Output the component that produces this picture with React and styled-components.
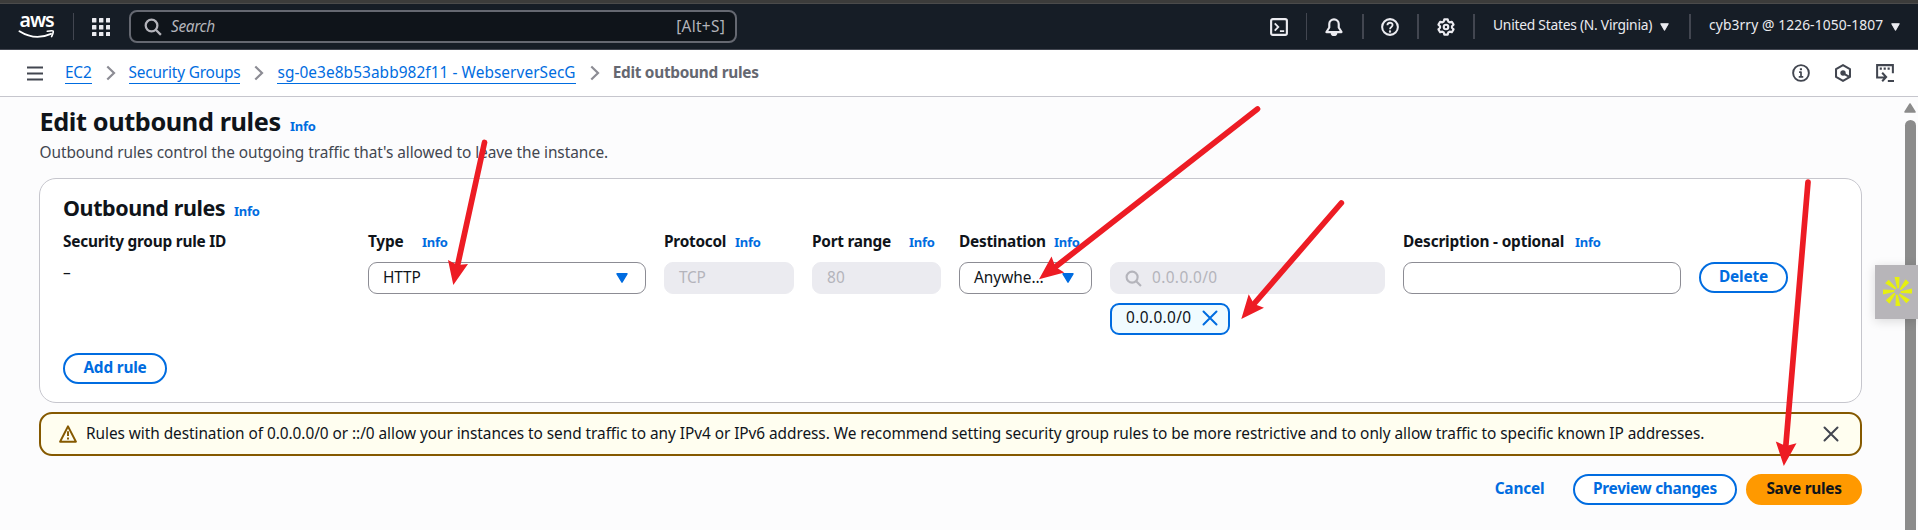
import React from 'react';
import styled, { createGlobalStyle } from 'styled-components';

const Global = createGlobalStyle`
  * { box-sizing: border-box; }
  html, body { margin: 0; height: 100%; overflow: hidden; }
  body {
    background: #fcfcfd;
    color: #0f141a;
    font-family: "Noto Sans", "Open Sans", sans-serif;
    font-size: 15.4px;
    line-height: 22px;
  }
`;

const Page = styled.div`
  position: relative;
  height: 530px;
  display: flex;
  flex-direction: column;
  overflow: hidden;
  white-space: nowrap;
`;

/* ---------- top navigation ---------- */
const WindowEdge = styled.div`
  height: 4px;
  background: #3c3c3b;
  border-bottom: 1px solid #4b4b4b;
`;
const TopNav = styled.header`
  height: 46px;
  padding-left: 18px;
  background: #161d26;
  border-bottom: 1px solid #424650;
  display: flex;
  align-items: center;
`;
const LogoBox = styled.div`
  width: 38px;
  height: 34px;
  display: flex;
  flex-direction: column;
  color: #fff;
  svg { flex: none; margin-top: -2px; }
`;
const LogoWord = styled.span`
  margin-top: -1px;
  padding-left: 1.5px;
  font-size: 19.5px;
  font-weight: 600;
  line-height: 22px;
  letter-spacing: -1px;
`;
const NavRule = styled.span`
  width: ${(p) => p.$w || 2}px;
  height: ${(p) => (p.$w === 1 ? 27 : 25)}px;
  margin-left: ${(p) => p.$ml}px;
  margin-top: ${(p) => (p.$w === 1 ? 0 : -1)}px;
  background: #424650;
`;
const NavIcon = styled.span`
  display: flex;
  margin-left: ${(p) => p.$ml}px;
  color: #ebebf0;
`;
const SearchBox = styled.div`
  width: 608px;
  height: 33px;
  margin-left: 19px;
  padding: 0 10px 0 13px;
  display: flex;
  align-items: center;
  color: #b4b4bb;
  background: #0f141a;
  border: 2px solid #656871;
  border-radius: 8px;
`;
const SearchHint = styled.em`
  flex: 1;
  margin-left: 9px;
  letter-spacing: -0.35px;
`;
const Shortcut = styled.span`
  letter-spacing: 0.3px;
`;
const NavText = styled.span`
  display: flex;
  align-items: center;
  margin-left: ${(p) => p.$ml}px;
  margin-top: -3px;
  color: #ebebf0;
  font-size: 13.8px;
  letter-spacing: ${(p) => p.$ls}px;
  svg { margin: 3px 0 0 ${(p) => p.$caret}px; }
`;

/* ---------- breadcrumb bar ---------- */
const CrumbBar = styled.nav`
  height: 47px;
  padding: 0 24px 0 27px;
  background: #fff;
  border-bottom: 1px solid #c6c6cd;
  display: flex;
  align-items: center;
  color: #424650;
`;
const Crumb = styled.a`
  height: 20px;
  line-height: 18px;
  margin-top: 1px;
  color: #006ce0;
  border-bottom: 1px solid #006ce0;
  letter-spacing: ${(p) => p.$ls}px;
`;
const CurrentCrumb = styled.span`
  flex: 1;
  color: #656871;
  font-weight: 700;
  letter-spacing: -0.28px;
`;
const Tray = styled.div`
  display: flex;
  gap: 24px;
`;

/* ---------- content ---------- */
const Main = styled.main`
  padding: 7px 56px 0 39px;
`;
const Heading = styled.div`
  display: flex;
  align-items: baseline;
  height: ${(p) => p.$h}px;
  line-height: ${(p) => p.$h}px;
`;
const H1 = styled.h1`
  margin: 0;
  width: 251px;
  padding-left: 0.5px;
  font-size: 25.3px;
  letter-spacing: -0.4px;
`;
const H2 = styled.h2`
  margin: 0;
  width: 171px;
  font-size: 21.5px;
  letter-spacing: -0.42px;
`;
const Info = styled.a`
  color: #006ce0;
  font-size: 13px;
  font-weight: 700;
  letter-spacing: -0.3px;
`;
const Lead = styled.p`
  margin: 4px 0 0 0.5px;
  color: #424650;
  letter-spacing: -0.07px;
`;
const Card = styled.section`
  height: 225px;
  margin-top: 14px;
  padding: 14px 23px 0;
  background: #fff;
  border: 1px solid #c6c6cd;
  border-radius: 17px;
`;
const RuleGrid = styled.div`
  margin-top: 6px;
  display: grid;
  grid-template-columns: 287px 278px 130px 129px 133px 275px 278px 89px;
  column-gap: 18px;
  align-items: start;
`;
const Label = styled.div`
  height: 22px;
  display: flex;
  align-items: baseline;
  margin: 2px 0 9px;
  font-weight: 700;
`;
const LabelText = styled.span`
  width: ${(p) => p.$w}px;
  letter-spacing: ${(p) => p.$ls}px;
`;
const RuleId = styled.div`
  line-height: 22px;
`;
const Field = styled.div`
  height: 32px;
  padding: 0 17px 0 14px;
  display: flex;
  align-items: center;
  justify-content: ${(p) => (p.$lead ? 'flex-start' : 'space-between')};
  gap: ${(p) => (p.$lead ? 10 : 0)}px;
  color: ${(p) => (p.$disabled ? '#b4b4bb' : '#0f141a')};
  background: ${(p) => (p.$disabled ? '#ebebf0' : '#fff')};
  border: 1px solid ${(p) => (p.$disabled ? '#ebebf0' : '#8c8c94')};
  border-radius: 9px;
  letter-spacing: ${(p) => p.$ls || 0}px;
`;
const Token = styled.div`
  width: 120px;
  height: 32px;
  margin-top: 9px;
  padding: 0 10px 3px 14px;
  display: flex;
  align-items: center;
  justify-content: space-between;
  background: #f0fbff;
  border: 2px solid #006ce0;
  border-radius: 9px;
  letter-spacing: 0.38px;
`;
const buttonColors = {
  normal: { border: '#006ce0', text: '#006ce0', fill: '#fff' },
  link: { border: 'transparent', text: '#006ce0', fill: 'transparent' },
  primary: { border: '#ff9900', text: '#0f141a', fill: '#ff9900' },
};
const Button = styled.button`
  width: ${(p) => p.$w}px;
  height: 31px;
  padding: 0 0 1px;
  font: 700 15.4px/22px "Noto Sans", "Open Sans", sans-serif;
  letter-spacing: ${(p) => p.$ls}px;
  border-radius: 16px;
  border: 2px solid ${(p) => buttonColors[p.$kind || 'normal'].border};
  color: ${(p) => buttonColors[p.$kind || 'normal'].text};
  background: ${(p) => buttonColors[p.$kind || 'normal'].fill};
`;
const CardFooter = styled.div`
  margin-top: 18px;
`;
const Alert = styled.div`
  height: 44px;
  margin-top: 9px;
  padding: 0 21px 1px 18px;
  display: flex;
  align-items: center;
  background: #fffef0;
  border: 2px solid #855900;
  border-radius: 13px;
`;
const AlertText = styled.span`
  flex: 1;
  margin-left: 9px;
  letter-spacing: -0.055px;
`;
const Dismiss = styled.span`
  display: flex;
  color: #424650;
`;
const Actions = styled.div`
  display: flex;
  justify-content: flex-end;
  margin-top: 18px;
  gap: 9px;
`;

/* ---------- overlays ---------- */
const Scrollbar = styled.div`
  position: absolute;
  top: 103px;
  right: 2px;
  bottom: 0;
  width: 12px;
  display: flex;
  flex-direction: column;
  align-items: center;
`;
const Thumb = styled.div`
  width: 11px;
  flex: 1;
  margin-top: 7px;
  background: #8b8b8b;
  border-radius: 6px 6px 0 0;
`;
const SideWidget = styled.div`
  position: absolute;
  top: 265px;
  right: 0;
  width: 43px;
  height: 54px;
  padding: 11px 0 0 7px;
  background: #b7b5b9;
  box-shadow: 0 2px 10px rgba(0, 0, 0, 0.14);
`;
const Markup = styled.svg`
  position: absolute;
  inset: 0;
  pointer-events: none;
`;

/* ---------- icons ---------- */
const Svg = ({ s = 18, children, sw = 2 }) => (
  <svg width={s} height={s} viewBox="0 0 16 16" fill="none" stroke="currentColor" strokeWidth={sw} strokeLinejoin="round">
    {children}
  </svg>
);
const Logo = () => (
  <LogoBox>
    <LogoWord>aws</LogoWord>
    <svg width="38" height="12" viewBox="0 0 38 12" fill="none" stroke="currentColor" strokeLinecap="round" strokeLinejoin="round">
      <path d="M1.5 2.2 Q17 12 33 4.8" strokeWidth="1.9" />
      <path d="M29.3 2.3 Q34.7 1.2 35.2 2.2 Q35.6 3.6 33.6 7.6" strokeWidth="1.6" />
    </svg>
  </LogoBox>
);
const Apps = () => (
  <svg width="18" height="18" viewBox="0 0 18 18" fill="currentColor">
    {[0, 7, 14].flatMap((y) => [0, 7, 14].map((x) => <rect key={`${x}-${y}`} x={x} y={y} width="4.4" height="4.4" rx="0.5" />))}
  </svg>
);
const Magnifier = ({ s = 18 }) => (
  <Svg s={s}><circle cx="6.7" cy="6.7" r="5.2" /><path d="M10.5 10.5 15 15" /></Svg>
);
const Caret = ({ w = 8, h = 7.5 }) => (
  <svg width={w} height={h} viewBox="0 0 12 10"><path d="M1 .8h10L6 9.2z" fill="currentColor" stroke="currentColor" strokeWidth="1.4" strokeLinejoin="round" /></svg>
);
const Blue = styled.span`
  display: flex;
  color: #006ce0;
`;
const ChevronIcon = ({ className }) => (
  <svg className={className} width="10" height="16" viewBox="0 0 10 16"><path d="M1.3 1.5 8 8l-6.7 6.5" fill="none" stroke="#8c8c94" strokeWidth="2.2" /></svg>
);
const Chevron = styled(ChevronIcon)`
  margin: 0 13px 0 14px;
`;
const Cross = ({ s = 16, w = 2 }) => (
  <svg width={s} height={s} viewBox="0 0 16 16"><path d="M1.5 1.5l13 13M14.5 1.5l-13 13" stroke="currentColor" strokeWidth={w} strokeLinecap="round" /></svg>
);
const Warning = () => (
  <svg width="18" height="18" viewBox="0 0 16 16" fill="none" stroke="#855900" strokeWidth="1.8" strokeLinejoin="round">
    <path d="M8 1.2 15 14.8H1z" />
    <path d="M8 5.5v4.3M8 11.2v1.7" strokeWidth="1.7" />
  </svg>
);
const Burst = () => (
  <svg width="31" height="31" viewBox="-15.5 -15.5 31 31" fill="#e6f011">
    {[0, 45, 90, 135, 180, 225, 270, 315].map((a) => (
      <path key={a} d="M-3-14.5 2-14.5 1.6-3.4-.2-3z" transform={`rotate(${a})`} />
    ))}
  </svg>
);
const Menu = styled.span`
  display: flex;
  margin-right: 22px;
`;

const arrows = [
  { from: [484.5, 142.5], to: [457, 268], head: '453.3,285 448,260 457.5,265 468,264' },
  { from: [1257.5, 109], to: [1054, 268], head: '1039,279.3 1051.5,256.5 1055.5,267 1064.3,272.5' },
  { from: [1341.3, 203], to: [1253, 305], head: '1241.3,319 1248.7,294.3 1254,304 1264,307.7' },
  { from: [1808, 182], to: [1785.8, 446], head: '1783.8,466 1775.8,441.5 1786,446 1796.5,443.3' },
];

export default function App() {
  return (
    <>
      <Global />
      <Page>
        <WindowEdge />
        <TopNav>
          <Logo />
          <NavRule $w={1} $ml={17} />
          <NavIcon $ml={18}><Apps /></NavIcon>
          <SearchBox>
            <Magnifier />
            <SearchHint>Search</SearchHint>
            <Shortcut>[Alt+S]</Shortcut>
          </SearchBox>
          <NavIcon $ml={533}>
            <Svg sw={1.9}><rect x="1" y="1" width="14" height="14" rx="1.5" /><path d="M4.2 4.7 7.4 8l-3.2 3.3M8.8 11.7h3.8" strokeWidth="1.6" strokeLinejoin="miter" /></Svg>
          </NavIcon>
          <NavRule $w={1} $ml={18} />
          <NavIcon $ml={18}>
            <Svg sw={1.9}><path d="M8 1.2a4.2 4.2 0 0 0-4.2 4.2v3L1.3 12.5h13.4L12.2 8.4v-3A4.2 4.2 0 0 0 8 1.2z" /><path d="M5 13h6a3 3 0 0 1-6 0z" fill="currentColor" stroke="none" /></Svg>
          </NavIcon>
          <NavRule $ml={19} />
          <NavIcon $ml={17}>
            <Svg sw={1.8}><circle cx="8" cy="8" r="7" /><path d="M5.7 6.5c0-3 4.6-3 4.6-.2C10.3 8 8 7.9 8 10" strokeWidth="1.6" /><circle cx="8" cy="12" r=".6" strokeWidth=".9" /></Svg>
          </NavIcon>
          <NavRule $ml={18} />
          <NavIcon $ml={18}>
            <Svg sw={1.9}>
              <path d="M6.5 1.2h3l.5 1.9 1.3.8 1.9-.6 1.5 2.6L13.3 7.3v1.4l1.4 1.4-1.5 2.6-1.9-.6-1.3.8-.5 1.9h-3L6 12.9l-1.3-.8-1.9.6-1.5-2.6 1.4-1.4V7.3L1.3 5.9l1.5-2.6 1.9.6L6 3.1z" />
              <circle cx="8" cy="8" r="2" />
            </Svg>
          </NavIcon>
          <NavRule $ml={18} />
          <NavText $ml={18} $ls={-0.24} $caret={8}>United States (N. Virginia)<Caret w={9} h={8} /></NavText>
          <NavRule $ml={20} />
          <NavText $ml={18} $ls={0.1} $caret={8}>cyb3rry @ 1226-1050-1807<Caret w={9} h={8} /></NavText>
        </TopNav>

        <CrumbBar>
          <Menu><svg width="16" height="15" viewBox="0 0 16 15"><path d="M0 1.5h16M0 7.5h16M0 13.5h16" stroke="#424650" strokeWidth="2" /></svg></Menu>
          <Crumb $ls={-0.2}>EC2</Crumb>
          <Chevron />
          <Crumb $ls={-0.18}>Security Groups</Crumb>
          <Chevron />
          <Crumb $ls={0.07}>sg-0e3e8b53abb982f11 - WebserverSecG</Crumb>
          <Chevron />
          <CurrentCrumb>Edit outbound rules</CurrentCrumb>
          <Tray>
            <Svg sw={1.7}><circle cx="8" cy="8" r="7" /><path d="M6.3 7.3H8v4.2M6 11.5h4" strokeWidth="1.5" /><path d="M7 3.8h1.9v1.7H7z" fill="currentColor" stroke="none" /></Svg>
            <Svg sw={1.8}><path d="M8 1l6.2 3.5v7L8 15l-6.2-3.5v-7z" /><circle cx="8" cy="8" r="1.5" fill="currentColor" /><path d="M8.5 8.5l4.8 2.7" /></Svg>
            <Svg sw={1.8}><path d="M15 8.2V1H1v11h7M5.5 7.8 9 11.6 5.5 15.3" strokeLinejoin="miter" /><path d="M10.5 15.1H16" /><path d="M3.3 4.1h9.6" strokeDasharray="1.9 1.6" /></Svg>
          </Tray>
        </CrumbBar>

        <Main>
          <Heading $h={34}><H1>Edit outbound rules</H1><Info>Info</Info></Heading>
          <Lead>Outbound rules control the outgoing traffic that's allowed to leave the instance.</Lead>

          <Card>
            <Heading $h={30}><H2>Outbound rules</H2><Info>Info</Info></Heading>
            <RuleGrid>
              <div>
                <Label><LabelText $ls={-0.23}>Security group rule ID</LabelText></Label>
                <RuleId>–</RuleId>
              </div>
              <div>
                <Label><LabelText $w={54} $ls={-0.2}>Type</LabelText><Info>Info</Info></Label>
                <Field $ls={-0.1}>HTTP<Blue><Caret w={12} h={10} /></Blue></Field>
              </div>
              <div>
                <Label><LabelText $w={71} $ls={-0.25}>Protocol</LabelText><Info>Info</Info></Label>
                <Field $disabled $ls={-0.3}>TCP</Field>
              </div>
              <div>
                <Label><LabelText $w={97} $ls={-0.25}>Port range</LabelText><Info>Info</Info></Label>
                <Field $disabled $ls={0.2}>80</Field>
              </div>
              <div>
                <Label><LabelText $w={95} $ls={-0.25}>Destination</LabelText><Info>Info</Info></Label>
                <Field>Anywhe…<Blue><Caret w={12} h={10} /></Blue></Field>
              </div>
              <div>
                <Label />
                <Field $disabled $lead $ls={0.38}><Magnifier s={17} />0.0.0.0/0</Field>
                <Token>0.0.0.0/0<Blue><Cross /></Blue></Token>
              </div>
              <div>
                <Label><LabelText $w={172} $ls={-0.18}>Description - optional</LabelText><Info>Info</Info></Label>
                <Field />
              </div>
              <div>
                <Label />
                <Button $w={89} $ls={-0.2}>Delete</Button>
              </div>
            </RuleGrid>
            <CardFooter><Button $w={104} $ls={-0.2}>Add rule</Button></CardFooter>
          </Card>

          <Alert>
            <Warning />
            <AlertText>Rules with destination of 0.0.0.0/0 or ::/0 allow your instances to send traffic to any IPv4 or IPv6 address. We recommend setting security group rules to be more restrictive and to only allow traffic to specific known IP addresses.</AlertText>
            <Dismiss><Cross /></Dismiss>
          </Alert>

          <Actions>
            <Button $kind="link" $w={89} $ls={-0.2}>Cancel</Button>
            <Button $w={164} $ls={-0.29}>Preview changes</Button>
            <Button $kind="primary" $w={116} $ls={-0.29}>Save rules</Button>
          </Actions>
        </Main>

        <Scrollbar>
          <svg width="12" height="10" viewBox="0 0 12 10"><path d="M6 1 11 9H1z" fill="#8b8b8b" stroke="#8b8b8b" strokeWidth="1.5" strokeLinejoin="round" /></svg>
          <Thumb />
        </Scrollbar>
        <SideWidget><Burst /></SideWidget>
        <Markup width="1918" height="530">
          {arrows.map((a) => (
            <g key={a.head} stroke="#ed1c24" fill="#ed1c24">
              <line x1={a.from[0]} y1={a.from[1]} x2={a.to[0]} y2={a.to[1]} strokeWidth="5.7" strokeLinecap="round" />
              <polygon points={a.head} stroke="none" />
            </g>
          ))}
        </Markup>
      </Page>
    </>
  );
}
